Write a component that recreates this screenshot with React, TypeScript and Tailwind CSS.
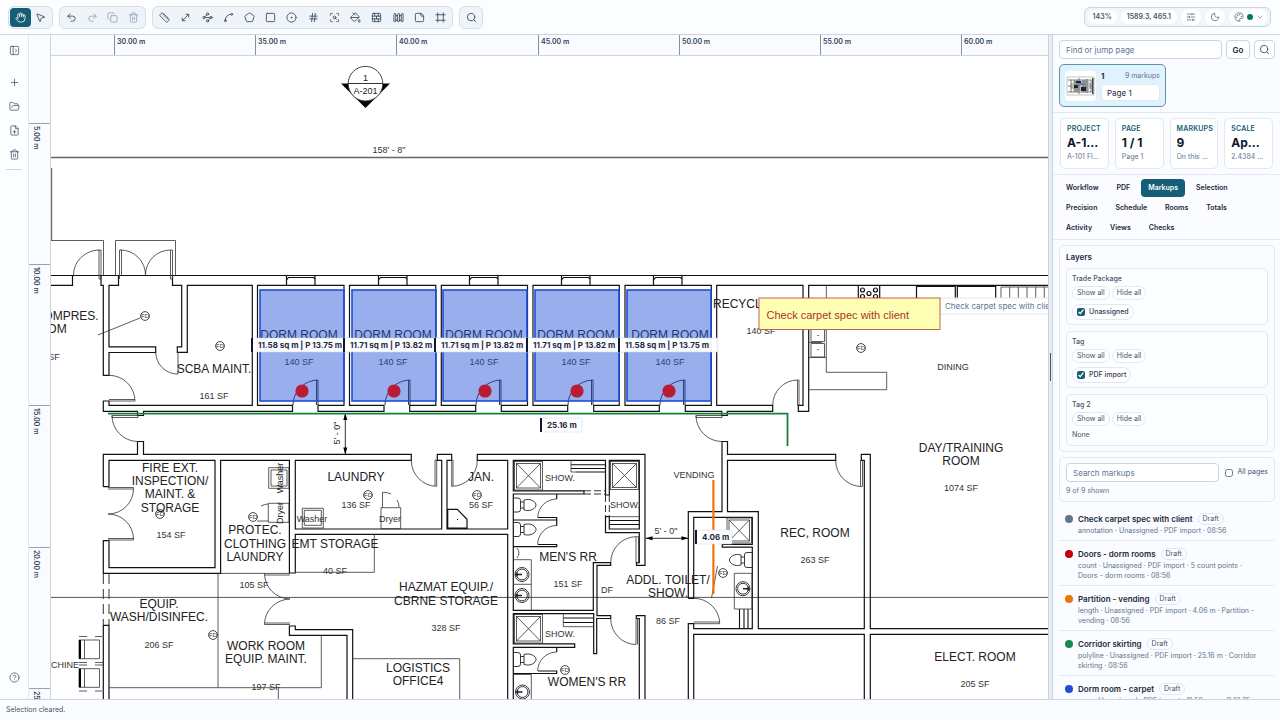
import React from 'react';
import {
  BrickWall, ChevronDown, CircleDot, CircleQuestionMark, Copy, Fence, FilePlus, FolderOpen, Frame, Hand, Hash,
  Moon, MousePointer2, MoveDiagonal, PaintBucket, Palette, PanelLeftOpen, Pentagon, Plus, Redo2, Ruler,
  ScanSearch, Search, SlidersHorizontal, Spline, Square, StickyNote, Trash2, Undo2, Waypoints,
} from 'lucide-react';

type IconType = React.ComponentType<{ size?: number; strokeWidth?: number }>;
type Tool = { label: string; icon: IconType; active?: boolean; disabled?: boolean };

const TOOL_GROUPS: { width: string; tools: Tool[] }[] = [
  {
    width: 'w-[45px]',
    tools: [
      { label: 'Pan', icon: Hand, active: true },
      { label: 'Select', icon: MousePointer2 },
    ],
  },
  {
    width: 'w-[87px]',
    tools: [
      { label: 'Undo', icon: Undo2 },
      { label: 'Redo', icon: Redo2, disabled: true },
      { label: 'Duplicate', icon: Copy, disabled: true },
      { label: 'Delete', icon: Trash2, disabled: true },
    ],
  },
  {
    width: 'w-[301px]',
    tools: [
      { label: 'Calibrate', icon: Ruler },
      { label: 'Length', icon: MoveDiagonal },
      { label: 'Polyline', icon: Waypoints },
      { label: 'Arc', icon: Spline },
      { label: 'Area', icon: Pentagon },
      { label: 'Rectangle', icon: Square },
      { label: 'Circle', icon: CircleDot },
      { label: 'Count', icon: Hash },
      { label: 'Find symbol', icon: ScanSearch },
      { label: 'Fill', icon: PaintBucket },
      { label: 'Wall', icon: BrickWall },
      { label: 'Fence', icon: Fence },
      { label: 'Note', icon: StickyNote },
      { label: 'Crop', icon: Frame },
    ],
  },
  { width: 'w-6', tools: [{ label: 'Search', icon: Search }] },
];

const RAIL: Tool[] = [
  { label: 'Add', icon: Plus },
  { label: 'Open', icon: FolderOpen },
  { label: 'New file', icon: FilePlus },
  { label: 'Remove', icon: Trash2 },
];

const STATS = [
  { label: 'PROJECT', value: 'A-101 Floor Plan', note: 'A-101 Floor Plan.pdf' },
  { label: 'PAGE', value: '1 / 1', note: 'Page 1' },
  { label: 'MARKUPS', value: '9', note: 'On this page' },
  { label: 'SCALE', value: 'Applied', note: '2.4384 m per inch' },
];

const TABS = ['Workflow', 'PDF', 'Markups', 'Selection', 'Precision', 'Schedule', 'Rooms', 'Totals', 'Activity', 'Views', 'Checks'];

const LAYERS = [
  { name: 'Trade Package', item: 'Unassigned' },
  { name: 'Tag', item: 'PDF import' },
  { name: 'Tag 2', item: null },
];

const MARKUPS = [
  { name: 'Check carpet spec with client', dot: 'bg-slate-500', meta: 'annotation · Unassigned · PDF import · 08:56' },
  { name: 'Doors - dorm rooms', dot: 'bg-red-700', meta: 'count · Unassigned · PDF import · 5 count points · Doors - dorm rooms · 08:56' },
  { name: 'Partition - vending', dot: 'bg-[#ea760c]', meta: 'length · Unassigned · PDF import · 4.06 m · Partition - vending · 08:56' },
  { name: 'Corridor skirting', dot: 'bg-[#1a8a4a]', meta: 'polyline · Unassigned · PDF import · 25.16 m · Corridor skirting · 08:56' },
  { name: 'Dorm room - carpet', dot: 'bg-[#1d4ed8]', meta: 'area · Unassigned · PDF import · 11.58 sq m · P 13.75 m · Dorm room - carpet · 08:56' },
];

const X_TICKS = [
  [114, '30.00 m'], [255, '35.00 m'], [396, '40.00 m'], [538, '45.00 m'],
  [679, '50.00 m'], [820, '55.00 m'], [961, '60.00 m'],
] as const;
const Y_TICKS = [
  [123, '5.00 m'], [264, '10.00 m'], [405, '15.00 m'], [547, '20.00 m'], [688, '25.00 m'],
] as const;

// Left edge of each dorm room and the text of its area label
const DORMS = [
  [258, '11.58 sq m | P 13.75 m'],
  [350, '11.71 sq m | P 13.82 m'],
  [441, '11.71 sq m | P 13.82 m'],
  [533, '11.71 sq m | P 13.82 m'],
  [625, '11.58 sq m | P 13.75 m'],
] as const;
const DORM_TEXT_X = [299, 393, 484, 576, 670];

const DRAINS = [
  [145, 316], [220, 346], [861, 348], [160, 514], [253, 517], [213, 635], [368, 495], [477, 495], [565, 670], [723, 573],
];

const ROOM_NAMES: [number, number, string][] = [
  [170, 472, 'FIRE EXT.'], [170, 485, 'INSPECTION/'], [170, 498, 'MAINT. &'], [170, 512, 'STORAGE'],
  [255, 534, 'PROTEC.'], [255, 548, 'CLOTHING'], [255, 561, 'LAUNDRY'],
  [356, 481, 'LAUNDRY'], [481, 481, 'JAN.'], [335, 548, 'EMT STORAGE'],
  [446, 591, 'HAZMAT EQUIP./'], [446, 605, 'CBRNE STORAGE'],
  [159, 608, 'EQUIP.'], [159, 621, 'WASH/DISINFEC.'],
  [266, 650, 'WORK ROOM'], [266, 663, 'EQUIP. MAINT.'],
  [418, 672, 'LOGISTICS'], [418, 685, 'OFFICE4'],
  [568, 561, "MEN'S RR"], [587, 686, "WOMEN'S RR"],
  [668, 584, 'ADDL. TOILET/'], [668, 597, 'SHOW.'],
  [815, 537, 'REC, ROOM'], [961, 452, 'DAY/TRAINING'], [961, 465, 'ROOM'], [975, 661, 'ELECT. ROOM'],
  [214, 373, 'SCBA MAINT.'], [71, 320, 'OMPRES.'], [57, 333, 'OM'],
];

const SMALL_TEXTS: [number, number, string][] = [
  [214, 399, '161 SF'], [54, 360, 'SF'], [761, 334, '140 SF'], [171, 538, '154 SF'], [254, 588, '105 SF'],
  [356, 508, '136 SF'], [481, 508, '56 SF'], [335, 574, '40 SF'], [446, 631, '328 SF'], [159, 648, '206 SF'],
  [266, 690, '197 SF'], [568, 587, '151 SF'], [607, 593, 'DF'], [668, 624, '86 SF'], [815, 563, '263 SF'],
  [961, 491, '1074 SF'], [975, 687, '205 SF'], [953, 370, 'DINING'], [694, 478, 'VENDING'],
  [560, 481, 'SHOW.'], [625, 508, 'SHOW.'], [560, 637, 'SHOW.'], [312, 522, 'Washer'], [390, 522, 'Dryer'],
  [65, 668, 'CHINE'], [666, 534, `5' - 0"`], [389, 153, `158' - 8"`],
];

const WALLS = `
M51 275.5H1048
M51 285.3H72.5V275M101 275V285.3H103.3V375.3H109V352.5H155.7V346.8H109V285.3H118.5V275
M172.5 275V285.3H181.7V346.8H177.3V352.3H187.3V285.3H252.3V405.3H109V401H103.3V411.3H137.5V415.5H143.5V411.3H292.5V405.3H257.5V285.3H344V405.3H318V411.3H384V405.3H349.5V285.3H435.8V405.3H409.7V411.3H475.7V405.3H441.3V285.3H527.5V405.3H501.3V411.3H567.7V405.3H533V285.3H619.3V405.3H593.7V411.3H659.3V405.3H625V285.3H711.3V405.3H685.3V411.3H721.7V415.5H727.3V411.3H772.7V405.3H716.7V285.3H803V405.3H798.3V411.3H808.7V285.3H1048
M103.3 486.7V454.3H137.5V441.5H143.5V454.3H411.3V460.3H295.3V529H441.7V460.3H437.3V454.3H451.7V460.3H447V529H507.7V460.3H477.3V454.3H645V565.3H636.5V562.7H639.3V532.7H605.5V516.7H609.3V529H639.3V460.3H609.3V495H605.5V460.3H513.3V490.8H584V494H513.3V520H556.7V517.5H538
M109 486.7V460.3H215V567.7H109V540.7H103.3V573.4H220.6V460.3H289.4V573H295.3V534.4H507.7V699
M103.3 486.7H109
M103.3 699V625.4H109V699
M347 699V635.3H289.4V626H295.3V629.7H352.7V699
M556.7 494V499M513.3 520V546.7H556.7V544.5H538M556.7 520V526M513.3 546.7V610.3H593.3V562.7H610.7V565.3H597V615.7H610.7V618.5H596.7V653.7H593.7V613.7H513.3V643.8H574.7V647.3H513.3V673.5H556.7V671H538M556.7 647V652M513.3 673V699
M645 699V615.7H636.3V618.5H639.3V699
M688.3 598.3V511.7H722V441.5H727.5V454.3H835.7V460.3H727.5V511.7H758.3V628.7H864.3V460.3H861.3V454.3H870.3V628.7H1048
M688.3 598.3H693.7V517.4H752.3V544.3H722.3V547.2H752.3V628.7H693.7V623.7H688.3V699
M693.7 699V634.3H864.3V699M870.3 699V634.3H1048
M447.7 509.3H457.3L467 519.3V528H447.7Z
M916.5 300V286.5H955.3V300M957.3 300V286.5H995.7V300M858.3 298V286M879.7 298V286
`;

const THIN = `
M51 240.5H103.5V275M115.5 275V240.5H175.5V275
M73.5 275A26 25 0 0 1 99 250V279H101V250H98.5
M119.5 279V250H121.5V275M120.5 250A25 25 0 0 1 145.5 275A25 25 0 0 1 170.5 250V279H172.5V250H170.5
M155.7 352.3A22 22 0 0 0 176.5 374H178V352
M109 375.3A26 26 0 0 1 135 401H109M109 399.5H135
M112 415.5A26 26 0 0 0 137.5 441.5M112 415.5H138V417.5H112Z
M98 335L140 318
M108 487.5H133.5V489A25.5 25 0 0 1 108 514A25.5 25 0 0 1 133.5 539V540H108M108 489H133.5M108 538.5H133.5
M264.5 573.4A26 25.5 0 0 0 290 599A26 25.5 0 0 0 264.5 624.5H290M220 573.4H290M264.5 575H290M264.5 623H290
M218 573V687.7M109 687.7H321.3V635M278.3 687.7V699
M374.3 534V572.3H295
M353 658.7H459.7V699
M411.3 460A25.5 26 0 0 0 436.7 486.3V460H435V486
M451.7 460V486.3A25.5 26 0 0 0 477.3 460M453 460V486
M556.7 499A19 19 0 0 0 537.7 518M556.7 525.5A19 19 0 0 0 537.7 544.5M556.7 652A19 19 0 0 0 537.7 671
M610.7 562.7A25.5 26 0 0 1 636 536.7V562.7H638.5V536.7H636
M610.7 618.5A25.5 26 0 0 0 636 644.5V618.5H637.5V644.5
M696 415.5A26 26 0 0 0 722 441.5M696 415.5H722V417.5H696Z
M772.7 405.3A25 25.3 0 0 1 797.5 380V405.3H799V380H797.5
M835.7 460.3A26 26 0 0 0 861 486.5H862.5V460M860.5 460V486
M693.7 598.3A26 25.5 0 0 1 719.7 623.7H693.7M693.7 622H719.7
M826.3 286V372.3H886.7V389.7H808.7
M1001 298V287H1048M1009.7 298V287M1018.3 298V287M1027 298V287M1035.7 298V287M1044.3 298V287
M811 328H824.5V341.5H811ZM811 343.5H824.5V357H811ZM808.7 342.5H822M809 357.5H826
M268.7 467.7H289V488.3H268.7ZM271 470H287V486H271ZM268.3 503.3H289V522.3H268.3ZM257 521H268M261 506Q265 504 268 504
M302.3 508.3H323.3V528H302.3ZM304.3 510.3H321.3V525.3H304.3ZM381 507.7H400.7V528.7H381ZM382.5 507.7V492.3Q388 492.3 391 494M397 500Q399 503 399 507
M79 640H99.5V658.7H79ZM84.5 640V658.7M79 668.7H99.5V687.3H79ZM84.5 668.7V687.3
M79 636.5H87M95 636.5H102M79 662.5H87M95 662.5H103M79 665H87M95 665H103M79 691H87M95 691H102
M609 516.7H639M593 626.7H563.3V614M571 460V472M571 472H576
M517 548Q521 553 517 558M513.3 559.7H531.3V610M513.3 584.3H531.3M513.3 674.5H531.3V699M734.3 573.3H752V609H734.3Z
M717.5 566L711.5 598
`;

// Benches and shelving, a little heavier than the door swings
const BENCHES = `
M571 464.7H605M571 468.5H605M576 472H605M609 520.5H639M609 524.5H639M563.3 618H593M563.3 622.5H593
M739.5 609V628M744 609V628M748 609V628
`;

const SHOWERS = [[514.5, 461.5, 28, 28.5], [610.5, 461.5, 28, 28], [514.5, 614.5, 28, 28.5], [727, 518, 24.5, 25]];
const SINKS = [[522, 574.5], [522, 595.5], [522.5, 692], [743, 588.7]];
const BURNERS = [[862.5, 290], [869, 293.5], [875.5, 290], [862.5, 296.5], [875.5, 296.5]];

const Tag: React.FC<{ x: number; y: number; width: number; text: string }> = ({ x, y, width, text }) => (
  <g>
    <rect x={x} y={y} width={width} height={14} rx={1} fill="#fff" fillOpacity={0.95} stroke="#cbd5e1" strokeWidth={0.5} />
    <rect x={x - 1} y={y} width={2} height={14} fill="#111827" />
    <text x={x + 6} y={y + 10} className="fill-slate-800 font-[Inter,sans-serif] text-[8px] font-bold">{text}</text>
  </g>
);

const FloorPlan: React.FC = () => (
  <svg role="img" aria-label="Floor plan A-101" className="block h-full w-full bg-white font-['Liberation_Sans',sans-serif]">
    <g transform="translate(-51 -56)">
      <path d="M51 157.5H1048" stroke="#666" strokeWidth={1.4} />
      <path d="M51.5 168V240" stroke="#777" strokeWidth={1.5} />
      <path d="M341 83.5H390L365.5 108Z" />
      <circle cx={365.5} cy={83.7} r={17.3} fill="#fff" stroke="#333" strokeWidth={0.9} />
      <path d="M348 83.5H383" stroke="#333" />
      <text x={365.5} y={81} textAnchor="middle" fill="#222" className="text-[9px]">1</text>
      <text x={365.5} y={93.5} textAnchor="middle" fill="#222" className="text-[9px]">A-201</text>

      <path d="M51 597.4H1048" stroke="#444" strokeWidth={0.9} />
      <path d={WALLS} fill="none" stroke="#111" strokeWidth={1.2} />
      <path d={BENCHES} fill="none" stroke="#111" strokeWidth={1.1} />
      <path d={THIN} fill="none" stroke="#333" strokeWidth={0.8} />
      <path d="M103.3 574V625M109 574V625" stroke="#333" strokeDasharray="10 5" />
      <path d="M584 490.8H605M584 494H605M605.5 495V516M609.3 495V516" stroke="#333" strokeDasharray="7 3" />
      <path d="M79 640h2v18.7h-2zM79 668.7h2v18.6h-2z" />

      {SHOWERS.map(([x, y, w, h]) => (
        <g key={`${x}-${y}`} fill="none" stroke="#333" strokeWidth={0.8}>
          <rect x={x} y={y} width={w} height={h} />
          <rect x={x + 2} y={y + 2} width={w - 4} height={h - 4} />
          <path d={`M${x + 2} ${y + 2}l${w - 4} ${h - 4}m0 ${4 - h}l${4 - w} ${h - 4}`} />
        </g>
      ))}
      {[505, 529.5, 659.5].map((y) => (
        <g key={y} fill="none" stroke="#222" strokeWidth={0.9}>
          <path d={`M514 ${y - 7}h4q2.500 0 2.500 2.500v9q0 2.500 -2.500 2.500h-4`} />
          <path d={`M520.5 ${y - 3}h3.500M520.5 ${y + 3}h3.500M524 ${y - 5}v10`} />
          <path d={`M524 ${y - 5}C531 ${y - 7} 536 ${y - 3} 536 ${y}C536 ${y + 3} 531 ${y + 7} 524 ${y + 5}`} />
        </g>
      ))}
      <g fill="none" stroke="#222" strokeWidth={0.9}>
        <path d="M752 552.5h-5q-2.500 0 -2.500 2.500v10q0 2.500 2.500 2.500h5M744.5 557h-3.500M744.5 563h-3.500M741 555v10" />
        <path d="M741 555C734 553 729.500 557 729.500 560C729.500 563 734 567 741 565" />
      </g>
      {SINKS.map(([x, y]) => (
        <g key={`${x}-${y}`} fill="none" stroke="#222" strokeWidth={0.9}>
          <circle cx={x} cy={y} r={7} />
          <circle cx={x} cy={y} r={5.4} />
          <path d={x > 700 ? `M${x + 7} ${y}h-7m5 -2v4` : `M${x - 7} ${y}h7m-5 -2v4`} strokeWidth={1.4} />
        </g>
      ))}
      {BURNERS.map(([x, y]) => <circle key={`${x}-${y}`} cx={x} cy={y} r={2} fill="none" stroke="#111" strokeWidth={1.2} />)}
      <path d="M817.5 335h1v1h-1zM817.5 349h1v1h-1zM457 519h1v1h-1z" />

      {DRAINS.map(([x, y]) => (
        <g key={`${x}-${y}`}>
          <circle cx={x} cy={y} r={4.4} fill="none" stroke="#333" strokeWidth={0.9} />
          <text x={x} y={y + 2} textAnchor="middle" fill="#333" className="text-[6px]">FD</text>
        </g>
      ))}

      {/* Corridor width dimensions */}
      <path d="M345.3 414V454M646 538.3H688" stroke="#333" />
      <path d="M345.3 413l-2 7h4zM345.3 454.5l-2 -7h4zM645.5 538.3l7 -2v4zM688.5 538.3l-7 -2v4z" />
      <text transform="translate(340 433) rotate(-90)" textAnchor="middle" fill="#222" className="text-[9px]">5&#39; - 0&quot;</text>
      <text transform="translate(283 478) rotate(-90)" textAnchor="middle" fill="#222" className="text-[9px]">Washer</text>
      <text transform="translate(283 513) rotate(-90)" textAnchor="middle" fill="#222" className="text-[9px]">Dryer</text>

      {ROOM_NAMES.map(([x, y, t]) => (
        <text key={`${x}-${y}`} x={x} y={y} textAnchor="middle" fill="#222" className="text-[12px]">{t}</text>
      ))}
      <text x={713} y={308} fill="#222" className="text-[12px]">RECYCLING</text>
      {SMALL_TEXTS.map(([x, y, t]) => (
        <text key={`${x}-${y}`} x={x} y={y} textAnchor="middle" fill="#333" className="text-[9px]">{t}</text>
      ))}

      {DORMS.map(([x], i) => (
        <g key={x}>
          <path d={`M${x + 28.5} 275V285M${x + 57} 275V285M${x + 28.5} 280l2 -2.500h25l2 2.500`} fill="none" stroke="#111" strokeWidth={1.2} />
          <path d={`M${x + 35} 405A25.5 25 0 0 1 ${x + 60} 380V405M${x + 58.5} 380V405`} fill="none" stroke="#222" strokeWidth={0.9} />
          <text x={DORM_TEXT_X[i]} y={339} textAnchor="middle" fill="#222" className="text-[12px]">DORM ROOM</text>
          <text x={DORM_TEXT_X[i]} y={365} textAnchor="middle" fill="#333" className="text-[9px]">140 SF</text>
        </g>
      ))}
      {DORMS.map(([x]) => (
        <g key={x}>
          <rect x={x + 2} y={290} width={84} height={111} fill="#1d4ed8" fillOpacity={0.45} stroke="#1d4ed8" strokeWidth={1.6} />
          <circle cx={x + 44} cy={391} r={6.6} fill="#b91c35" />
        </g>
      ))}
      <path d="M108 413.7H787.5V446" fill="none" stroke="#15803d" strokeWidth={1.8} />
      <path d="M713.4 480V594" stroke="#ea760c" strokeWidth={2.2} />
      {DORMS.map(([x, label]) => <Tag key={x} x={x - 6} y={338} width={99} text={label} />)}
      <Tag x={541} y={418} width={41} text="25.16 m" />
      <Tag x={696} y={530} width={36} text="4.06 m" />

      <rect x={940} y={298} width={120} height={16} fill="#fff" fillOpacity={0.85} stroke="#e2e8f0" />
      <text x={945} y={309} className="fill-slate-500 font-[Inter,sans-serif] text-[8px]">Check carpet spec with client</text>
      <rect x={759} y={298} width={181} height={31.5} fill="#ffffb4" stroke="#b8553a" strokeWidth={0.9} />
      <text x={766.5} y={319} fill="#a8361c" className="text-[11px]">Check carpet spec with client</text>
    </g>
  </svg>
);

const Header: React.FC = () => (
  <header className="flex h-[35px] shrink-0 items-center gap-[6px] border-b border-slate-300 bg-[#fcfdff] pr-[9px] pl-2">
    {TOOL_GROUPS.map(({ width, tools }) => (
      <div key={width} className={`flex h-[23px] items-center rounded-md border border-[#d5dee8] bg-[#eff4f9] px-px ${width}`}>
        {tools.map(({ label, icon: Icon, active, disabled }) => (
          <button
            key={label}
            type="button"
            aria-label={label}
            disabled={disabled}
            className={`flex h-[19px] min-w-0 flex-1 items-center justify-center rounded ${active ? 'bg-[#155e75] text-white' : disabled ? 'text-slate-400' : 'text-slate-700'}`}
          >
            <Icon size={11} strokeWidth={1.8} />
          </button>
        ))}
      </div>
    ))}
    <div className="ml-auto flex h-[20px] items-center gap-1 rounded-md border border-slate-300 bg-slate-100 px-[3px] text-[7px] font-semibold text-slate-600">
      <span className="rounded-full bg-white px-[5px] py-[2px]">143%</span>
      <span className="rounded-full bg-white px-[6px] py-[2px]">1589.3, 465.1</span>
      <button type="button" aria-label="Display settings" className="flex h-4 w-5 items-center justify-center rounded-full bg-white text-slate-500"><SlidersHorizontal size={10} /></button>
      <button type="button" aria-label="Dark mode" className="flex h-4 w-5 items-center justify-center rounded-full bg-white text-slate-500"><Moon size={10} /></button>
      <button type="button" aria-label="Theme colour" className="flex h-4 items-center gap-[3px] rounded-full bg-white pr-[3px] pl-[5px] text-slate-500">
        <Palette size={10} />
        <span className="h-[6px] w-[6px] rounded-full bg-emerald-700" />
        <ChevronDown size={8} />
      </button>
    </div>
  </header>
);

const Rail: React.FC = () => (
  <nav aria-label="File actions" className="flex w-[29px] shrink-0 flex-col items-center border-r border-slate-200 bg-[#fcfdff] pt-[5px] text-slate-600">
    <button type="button" aria-label="Open side panel" className="flex h-5 w-5 items-center justify-center"><PanelLeftOpen size={11} strokeWidth={1.7} /></button>
    <div className="mt-3 flex flex-col gap-1">
      {RAIL.map(({ label, icon: Icon }) => (
        <button key={label} type="button" aria-label={label} className="flex h-5 w-5 items-center justify-center"><Icon size={11} strokeWidth={1.7} /></button>
      ))}
    </div>
    <hr className="mt-[5px] w-4 border-slate-300" />
    <button type="button" aria-label="Help" className="mt-auto mb-3 flex h-5 w-5 items-center justify-center"><CircleQuestionMark size={11} strokeWidth={1.7} /></button>
  </nav>
);

const Viewer: React.FC = () => (
  <main className="grid min-w-0 flex-1 grid-cols-[22px_minmax(0,1fr)] grid-rows-[21px_minmax(0,1fr)] overflow-hidden bg-[#f9fbfe]">
    <div className="border-r border-slate-300" />
    <svg aria-label="Horizontal ruler" className="block h-full w-full border-b border-slate-300">
      {X_TICKS.map(([x, label]) => (
        <g key={x} transform={`translate(${x - 51} 0)`}>
          <path d="M0.5 0V21" stroke="#8490a0" />
          <text x={3} y={9} className="fill-slate-700 text-[7px] font-semibold">{label}</text>
        </g>
      ))}
    </svg>
    <svg aria-label="Vertical ruler" className="block h-full w-full border-r border-slate-300">
      {Y_TICKS.map(([y, label]) => (
        <g key={y} transform={`translate(0 ${y - 56})`}>
          <path d="M0 0.5H22" stroke="#94a3b8" />
          <text transform="translate(5 3) rotate(90)" className="fill-slate-700 text-[7px] font-semibold">{label}</text>
        </g>
      ))}
    </svg>
    <FloorPlan />
  </main>
);

const PageThumb: React.FC = () => (
  <svg viewBox="0 0 31 30" className="h-[30px] w-[31px] shrink-0 rounded-sm bg-white" aria-hidden="true">
    <g fill="none" stroke="#444" strokeWidth={0.7}>
      <rect x={2} y={6} width={27} height={18} stroke="#aaa" />
      <path d="M6 9H26V21H6ZM6 13H26M6 17H26M10 9V21M14 7V23M18 9V21M22 8V22M3 15H28M8 11H24M8 19H24M3 9H6M3 21H6M12 9V21M20 9V21" />
      <path d="M27.7 7V23" strokeWidth={1.6} />
    </g>
    <path d="M11 10h5v2h-5zM16 16h5v4h-5zM9 14h4v3H9z" fill="#222" />
    <path d="M13 12h7v2h-7z" fill="#5b7bdc" />
  </svg>
);

const Inspector: React.FC = () => (
  <aside className="flex w-[227px] shrink-0 flex-col overflow-hidden bg-[#fafcff] text-slate-800">
    <div className="border-b border-slate-200 pt-[5px] pr-[5px] pb-[5px] pl-[6px]">
      <div className="flex items-center gap-1">
        <input type="text" aria-label="Find or jump page" placeholder="Find or jump page" className="h-[19px] min-w-0 flex-1 rounded border border-slate-300 bg-white px-[6px] text-[8px] placeholder:text-slate-500" />
        <button type="button" className="h-[19px] w-6 rounded border border-slate-300 bg-white text-[8px] font-semibold">Go</button>
        <button type="button" aria-label="Search pages" className="flex h-[19px] w-[21px] items-center justify-center rounded border border-slate-300 bg-white text-slate-700"><Search size={11} strokeWidth={1.8} /></button>
      </div>
      <div className="mt-[5px] flex h-[43px] w-[107px] items-center gap-[5px] rounded-[5px] border border-[#5d93a8] bg-[#e0f2fe] px-[5px]">
        <PageThumb />
        <div className="min-w-0 flex-1">
          <div className="flex items-center justify-between text-[7px] leading-3">
            <span className="text-[8px] font-bold">1</span>
            <span className="text-slate-500">9 markups</span>
          </div>
          <input type="text" aria-label="Page name" defaultValue="Page 1" className="mt-[2px] block h-[17px] w-full rounded border border-slate-200 bg-white px-[5px] text-[8px]" />
        </div>
      </div>
    </div>

    <div className="grid grid-cols-4 gap-[6px] border-b border-slate-200 px-[7px] py-[5px]">
      {STATS.map((s) => (
        <div key={s.label} className="h-[51px] min-w-0 rounded-[5px] border border-slate-200 bg-white px-[6px] py-1">
          <div className="text-[7px] leading-3 font-semibold tracking-wide text-[#155e75]">{s.label}</div>
          <div className="truncate text-[12px] leading-4 font-bold text-slate-900">{s.value}</div>
          <div className="truncate text-[7px] leading-3 text-slate-500">{s.note}</div>
        </div>
      ))}
    </div>

    <div role="tablist" className="flex flex-wrap gap-x-1 gap-y-[2px] border-b border-slate-200 pt-[4px] pr-5 pb-[2px] pl-[6px]">
      {TABS.map((tab) => (
        <button
          key={tab}
          type="button"
          role="tab"
          aria-selected={tab === 'Markups'}
          className={`h-[18px] rounded px-[7px] text-[7px] font-semibold ${tab === 'Markups' ? 'bg-[#155e75] text-white' : 'text-slate-800'}`}
        >
          {tab}
        </button>
      ))}
    </div>

    <div className="min-h-0 flex-1 overflow-hidden pt-[5px] pr-[5px] pl-[6px]">
      <section className="rounded-[5px] border border-slate-200 px-[6px] pt-1 pb-[5px]">
        <h2 className="mb-1 text-[8px] leading-[14px] font-semibold">Layers</h2>
        <div className="flex flex-col gap-[6px]">
          {LAYERS.map(({ name, item }) => (
            <div key={name} className="rounded-[5px] border border-slate-200 bg-[#fdfeff] px-[5px] py-1">
              <h3 className="text-[7px] leading-3 font-medium text-slate-600">{name}</h3>
              <div className="mt-px flex gap-[2px]">
                {['Show all', 'Hide all'].map((action) => (
                  <button key={action} type="button" className="h-[14px] rounded-full border border-slate-200 bg-white px-1 text-[7px] leading-3 text-slate-600">{action}</button>
                ))}
              </div>
              {item ? (
                <label className="mt-1 flex h-4 w-fit items-center gap-1 rounded-full border border-slate-200 bg-white px-1 text-[7px] font-medium text-slate-700">
                  <input type="checkbox" defaultChecked className="h-2 w-2 accent-[#155e75]" />
                  {item}
                </label>
              ) : (
                <p className="mt-[3px] text-[7px] leading-3 text-slate-600">None</p>
              )}
            </div>
          ))}
        </div>
      </section>

      <section className="mt-[5px] rounded-[5px] border border-slate-200 px-[6px] pt-[5px] pb-1">
        <div className="flex items-center gap-[6px]">
          <input type="text" aria-label="Search markups" placeholder="Search markups" className="h-[19px] min-w-0 flex-1 rounded border border-slate-300 bg-white px-[6px] text-[8px] placeholder:text-slate-500" />
          <label className="flex items-center gap-1 text-[7px] text-slate-600">
            <input type="checkbox" className="h-2 w-2" />
            All pages
          </label>
        </div>
        <p className="mt-[3px] text-[7px] leading-3 text-slate-500">9 of 9 shown</p>
      </section>

      <ul className="mt-[4px]">
        {MARKUPS.map((m) => (
          <li key={m.name} className="flex gap-[5px] border-b border-slate-200 pt-[6px] pr-[12px] pb-1 pl-[6px]">
            <span className={`mt-[3px] h-2 w-2 shrink-0 rounded-full ${m.dot}`} />
            <div className="min-w-0">
              <div className="flex items-center gap-[5px]">
                <span className="text-[8px] leading-[14px] font-semibold">{m.name}</span>
                <span className="rounded-full border border-slate-200 px-1 text-[7px] leading-[10px] text-slate-600">Draft</span>
              </div>
              <p className="text-[7px] leading-[10px] text-slate-500">{m.meta}</p>
            </div>
          </li>
        ))}
      </ul>
    </div>
  </aside>
);

export default function App() {
  return (
    <div className="flex h-screen flex-col overflow-hidden bg-[#fafcff] font-[Inter,sans-serif]">
      <Header />
      <div className="flex min-h-0 flex-1">
        <Rail />
        <Viewer />
        <div role="separator" aria-orientation="vertical" className="flex w-[5px] shrink-0 items-center justify-center border-x border-slate-300 bg-[#e6ecf4]">
          <span className="h-7 w-px bg-slate-600" />
        </div>
        <Inspector />
      </div>
      <footer className="flex h-[21px] shrink-0 items-center border-t border-slate-300 bg-[#fafcff] px-[6px] text-[7px] text-slate-600">Selection cleared.</footer>
    </div>
  );
}
